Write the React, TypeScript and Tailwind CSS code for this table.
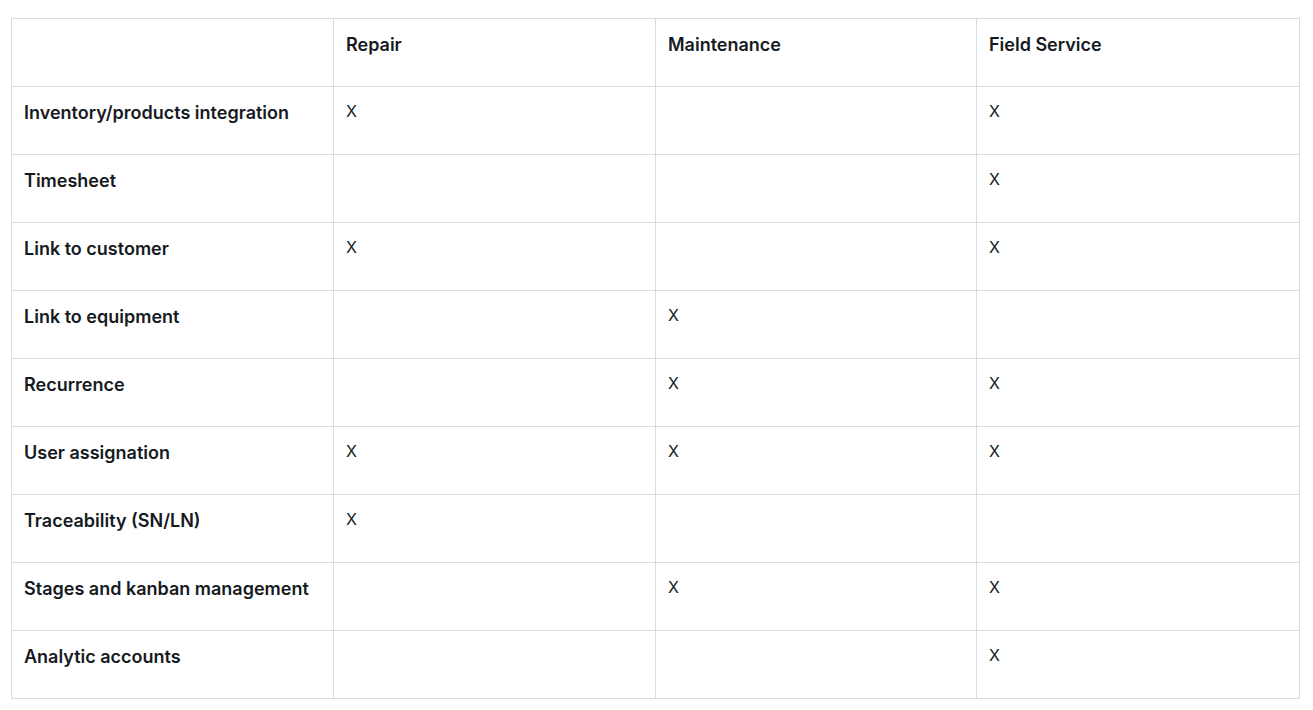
const cols = ["Repair", "Maintenance", "Field Service"]

// which columns have an X, in order: repair, maintenance, field service
const rows: [string, boolean[]][] = [
  ["Inventory/products integration", [true, false, true]],
  ["Timesheet", [false, false, true]],
  ["Link to customer", [true, false, true]],
  ["Link to equipment", [false, true, false]],
  ["Recurrence", [false, true, true]],
  ["User assignation", [true, true, true]],
  ["Traceability (SN/LN)", [true, false, false]],
  ["Stages and kanban management", [false, true, true]],
  ["Analytic accounts", [false, false, true]],
]

export default function App() {
  return (
    <div className="min-h-screen bg-white pt-[18px] pl-[11px] text-[#151a22]" style={{ fontFamily: "Inter, 'Noto Sans', sans-serif" }}>
      <table className="table-fixed border-collapse w-[1288px] text-[16px] leading-6">
        <colgroup>
          <col className="w-[322px]" />
          <col className="w-[322px]" />
          <col className="w-[321px]" />
          <col className="w-[323px]" />
        </colgroup>
        <thead>
          <tr className="h-[68px]">
            <th className="border border-[#dcdcdc] align-top text-left px-3 pt-[14px]"></th>
            {cols.map(c => (
              <th key={c} className="border border-[#dcdcdc] align-top text-left font-semibold text-[18px] px-3 pt-[14px]">{c}</th>
            ))}
          </tr>
        </thead>
        <tbody>
          {rows.map(([label, marks]) => (
            <tr key={label} className="h-[68px]">
              <td className="border border-[#dcdcdc] align-top font-semibold text-[18px] px-3 pt-[14px]">{label}</td>
              {marks.map((m, i) => (
                <td key={i} className="border border-[#dcdcdc] align-top px-3 pt-[12px]">{m ? "X" : ""}</td>
              ))}
            </tr>
          ))}
        </tbody>
      </table>
    </div>
  )
}
